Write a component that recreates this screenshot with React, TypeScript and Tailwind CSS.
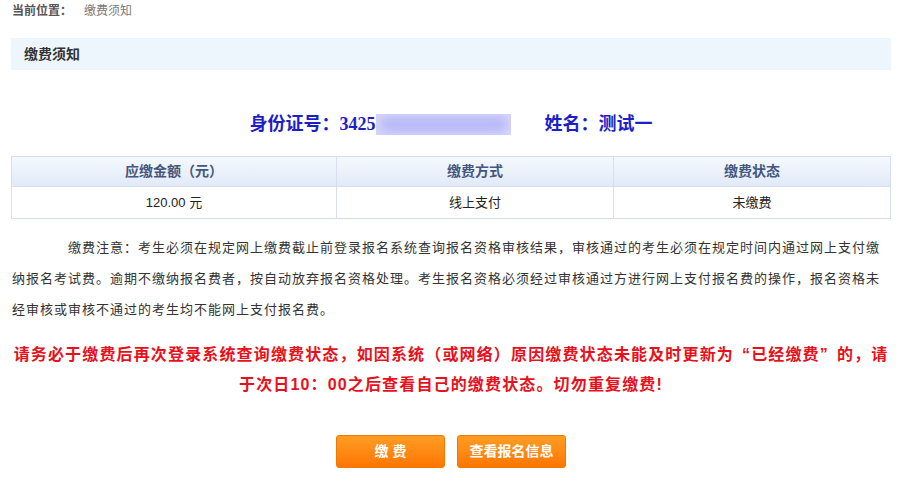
const sans = "font-['Liberation_Sans','Noto_Sans_CJK_SC',sans-serif]";

const columns = [
    { title: '应缴金额（元）', value: '120.00 元' },
    { title: '缴费方式', value: '线上支付' },
    { title: '缴费状态', value: '未缴费' },
];

function Breadcrumb() {
    return (
        <div className="flex h-[22px] items-center pl-[1px] text-[12px]">
            <span className="font-bold text-[#555]">当前位置：</span>
            <span className="ml-3 text-[#7a7a7a]">缴费须知</span>
        </div>
    );
}

function PaymentTable() {
    return (
        <div className="mt-[21px] border border-[#d6dfee]">
            <div className="grid h-[29px] grid-cols-[324px_277px_1fr] bg-linear-to-b from-[#f5f9fe] to-[#e1eaf8] text-[14px] font-bold text-[#44577f]">
                {columns.map((col, index) => (
                    <div key={col.title} className={`flex items-center justify-center ${index > 0 ? 'border-l border-[#d6dfee]' : ''}`}>
                        {col.title}
                    </div>
                ))}
            </div>
            <div className="grid h-[32px] grid-cols-[324px_277px_1fr] border-t border-[#d6dfee] text-[13px] text-[#222]">
                {columns.map((col, index) => (
                    <div key={col.title} className={`flex items-center justify-center ${index > 0 ? 'border-l border-[#d6dfee]' : ''}`}>
                        {col.value}
                    </div>
                ))}
            </div>
        </div>
    );
}

export default function App() {
    return (
        <div className={`min-h-[487px] bg-white ${sans}`}>
            <div className="ml-[11px] w-[880px]">
                <Breadcrumb />

                {/* Section title bar */}
                <div className="mt-[16px] flex h-[32px] items-center bg-[#eef6fd] pl-[13px] text-[14px] font-bold text-[#333]">缴费须知</div>

                {/* Identity line */}
                <div className="mt-[43px] flex h-[22px] items-center justify-center font-['Liberation_Serif','Noto_Sans_CJK_SC',serif] text-[18px] font-bold text-[#1e1ec8]">
                    <span>身份证号：3425</span>
                    <span className="relative h-[21px] w-[135px] overflow-hidden bg-[#d4d4fc]">
                        <span className="absolute inset-x-[4px] inset-y-[3px] rounded-full bg-[#b9b9f8] blur-[4px]" />
                    </span>
                    <span className="ml-[34px]">姓名：测试一</span>
                </div>

                <PaymentTable />

                <p className="mt-[13px] pl-[1px] indent-[56px] text-[13px] leading-[31px] tracking-[1px] text-[#333]">
                    缴费注意：考生必须在规定网上缴费截止前登录报名系统查询报名资格审核结果，审核通过的考生必须在规定时间内通过网上支付缴纳报名考试费。逾期不缴纳报名费者，按自动放弃报名资格处理。考生报名资格必须经过审核通过方进行网上支付报名费的操作，报名资格未经审核或审核不通过的考生均不能网上支付报名费。
                </p>

                <p className="mt-[15px] text-center text-[16px] leading-[30px] font-bold tracking-[1.15px] text-[#e8101a]">
                    请务必于缴费后再次登录系统查询缴费状态，如因系统（或网络）原因缴费状态未能及时更新为
                    <span className="pl-[8px]">“</span>已经缴费<span className="pr-[8px]">”</span>的，请
                    <br />
                    于次日10：00之后查看自己的缴费状态。切勿重复缴费!
                </p>

                <div className="mt-[35px] flex justify-center gap-[12px]">
                    <button className="h-[33px] w-[109px] rounded-[3px] border border-[#f07800] bg-linear-to-b from-[#ff9d22] to-[#ff7500] text-[14px] font-bold text-white">
                        缴 费
                    </button>
                    <button className="h-[33px] w-[109px] rounded-[3px] border border-[#f07800] bg-linear-to-b from-[#ff9d22] to-[#ff7500] text-[14px] font-bold text-white">
                        查看报名信息
                    </button>
                </div>
            </div>
        </div>
    );
}
